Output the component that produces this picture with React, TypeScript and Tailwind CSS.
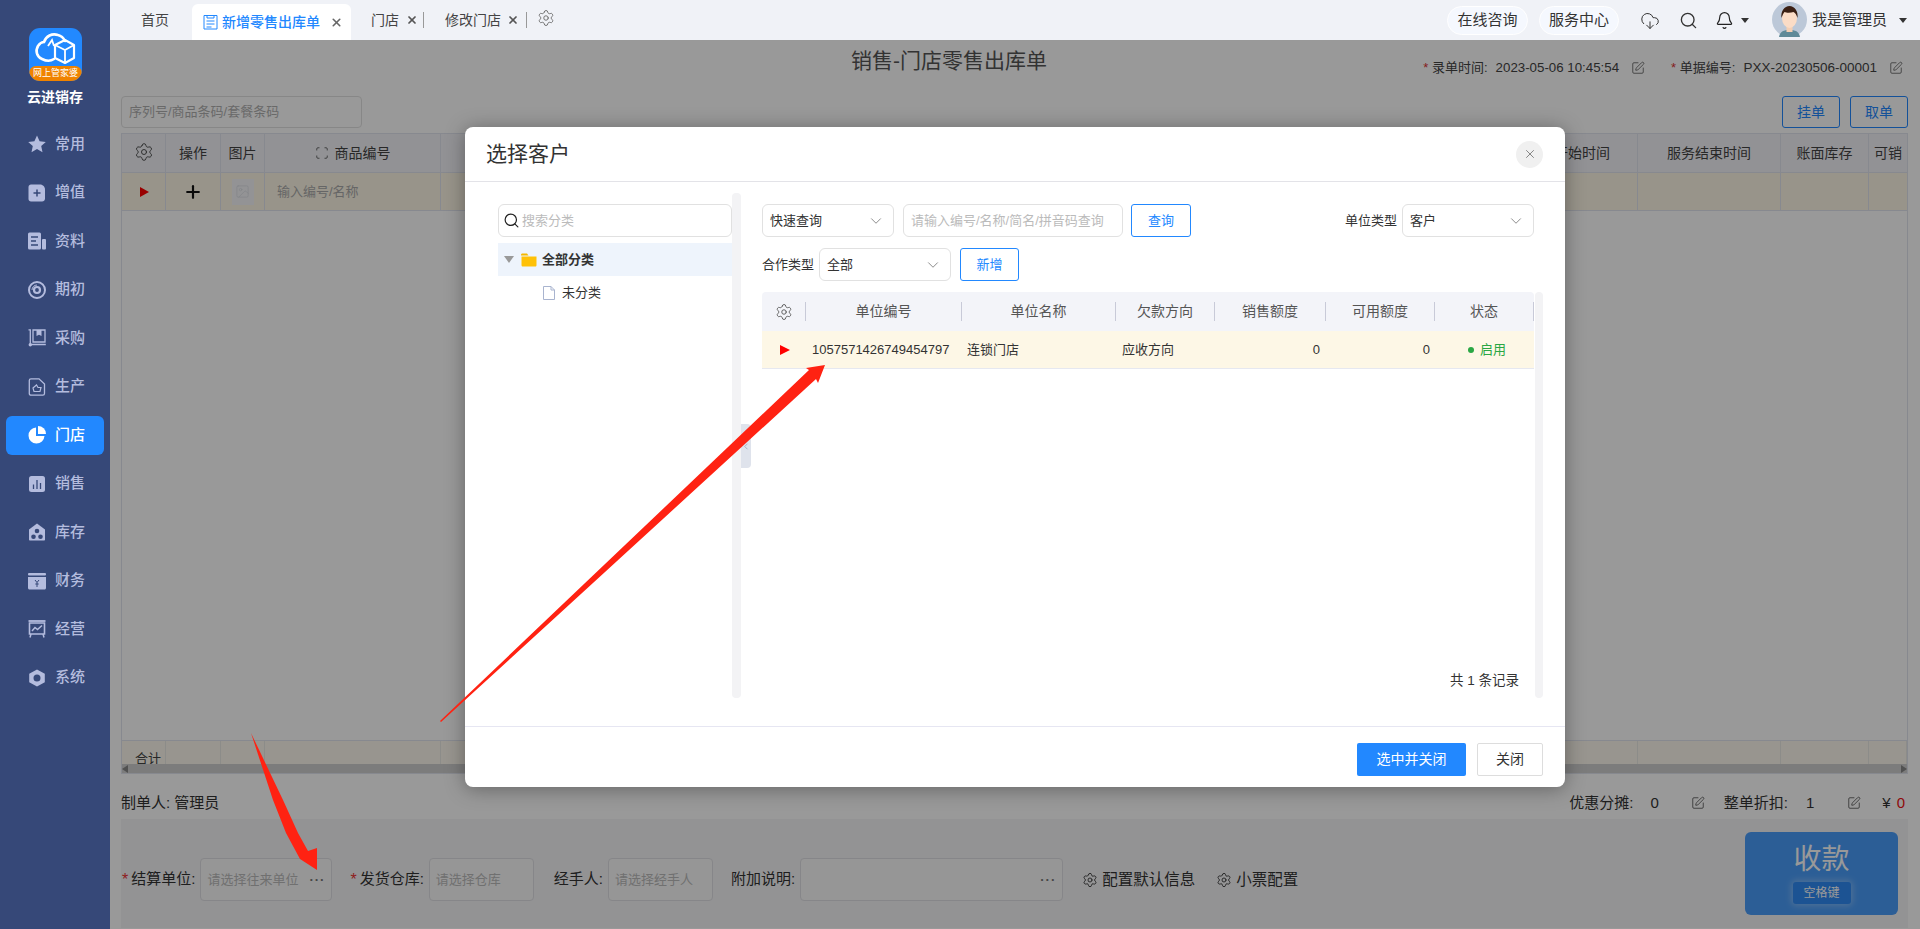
import type React from 'react'
import { Bell, ChevronDown, ChevronLeft, CloudDownload, Image, Plus, Scan, Search, Settings, SquarePen, X } from 'lucide-react'

const ICON = '#b4bcde'
const BG = '#364878'

const menu: { label: string; icon: React.JSX.Element; active?: boolean }[] = [
  { label: '常用', icon: <polygon points="9,0.5 11.6,6.2 17.8,6.9 13.2,11.1 14.5,17.3 9,14.1 3.5,17.3 4.8,11.1 0.2,6.9 6.4,6.2" fill={ICON} /> },
  {
    label: '增值',
    icon: (
      <>
        <path d="M3 0.5h9c3 0 5 2.5 5 5v9c0 1.700-1.300 3-3 3H3c-1.400 0-2.500-1.100-2.500-2.500V3C.5 1.600 1.600.5 3 .5z" fill={ICON} />
        <path d="M9 5.500v7M5.500 9h7" stroke={BG} strokeWidth="1.500" />
      </>
    ),
  },
  {
    label: '资料',
    icon: (
      <>
        <rect x="0" y="0.500" width="13" height="17" rx="1.500" fill={ICON} />
        <rect x="14" y="7" width="4" height="10.500" rx="1" fill={ICON} />
        <path d="M3 5h7M3 9h5M3 13h7" stroke={BG} strokeWidth="1.500" />
      </>
    ),
  },
  {
    label: '期初',
    icon: (
      <>
        <circle cx="9" cy="9" r="8" fill="none" stroke={ICON} strokeWidth="2" />
        <circle cx="9" cy="9" r="3" fill="none" stroke={ICON} strokeWidth="2.200" />
        <path d="M4 9a5 5 0 0 1 5-5" fill="none" stroke={ICON} strokeWidth="1" />
      </>
    ),
  },
  {
    label: '采购',
    icon: (
      <>
        <path d="M.5 .8h1.800v14.200M2.300 15.500h15.500" fill="none" stroke={ICON} strokeWidth="1.300" />
        <path d="M5 1h12v12H5z" fill="none" stroke={ICON} strokeWidth="1.300" />
        <path d="M8.500 1h5v6l-2.500-1.300L8.500 7z" fill={ICON} />
        <circle cx="2.300" cy="15.700" r="1.700" fill={ICON} />
      </>
    ),
  },
  {
    label: '生产',
    icon: (
      <>
        <path d="M3 .8h8l5.500 5.200v9.500c0 1-.8 1.700-1.700 1.700H3c-1 0-1.700-.7-1.700-1.700V2.500C1.300 1.500 2 .8 3 .8z" fill="none" stroke={ICON} strokeWidth="1.300" />
        <path d="M5 10l3.500-3 1.500 2.500h3l-1 4H6z" fill="none" stroke={ICON} strokeWidth="1.200" />
      </>
    ),
  },
  {
    label: '门店',
    active: true,
    icon: (
      <>
        <path d="M8 1.500a8 8 0 1 0 8.500 8.500H8z" fill="#fff" />
        <path d="M10 0a8 8 0 0 1 8 8h-8z" fill="#fff" />
      </>
    ),
  },
  {
    label: '销售',
    icon: (
      <>
        <rect x="1" y="1" width="16" height="16" rx="2.500" fill={ICON} />
        <path d="M5.500 9.500V14M9 5v9M12.500 8v6" stroke={BG} strokeWidth="1.300" />
      </>
    ),
  },
  {
    label: '库存',
    icon: (
      <>
        <path d="M9 .5l8 6v10c0 .7-.5 1-1 1H2c-.5 0-1-.3-1-1v-10z" fill={ICON} />
        <circle cx="9" cy="8" r="2.300" fill={BG} />
        <circle cx="5.500" cy="13.800" r="2.300" fill={BG} />
        <circle cx="12.500" cy="13.800" r="2.300" fill={BG} />
      </>
    ),
  },
  {
    label: '财务',
    icon: (
      <>
        <rect x="0" y="1" width="18" height="2.500" rx="1" fill={ICON} />
        <path d="M0 5h18v11c0 .8-.7 1.500-1.500 1.500h-15C.7 17.500 0 16.800 0 16z" fill={ICON} />
        <path d="M7 8l2 2.500L11 8M9 10.500V15M7.300 12h3.400" fill="none" stroke={BG} strokeWidth="1" />
      </>
    ),
  },
  {
    label: '经营',
    icon: (
      <>
        <path d="M.5 1h17" stroke={ICON} strokeWidth="1.800" />
        <path d="M1.500 3h15v11h-15z" fill="none" stroke={ICON} strokeWidth="1.600" />
        <path d="M4 11l3-3.500 2.500 2L14 5.500M3 14l-1 3.500M15 14l1 3.500" fill="none" stroke={ICON} strokeWidth="1.500" />
      </>
    ),
  },
  {
    label: '系统',
    icon: (
      <path
        fillRule="evenodd"
        d="M9 .5l7.800 4.300v8.400L9 17.500l-7.800-4.300V4.800zM9 5.500a3.500 3.500 0 1 0 0 7 3.500 3.500 0 0 0 0-7z"
        fill={ICON}
      />
    ),
  },
]

function Sidebar(): React.JSX.Element {
  return (
    <aside className="flex w-[110px] shrink-0 flex-col bg-[#364878] pt-[28px]">
      <div className="relative mx-auto ml-[29px] flex h-[53px] w-[53px] flex-col overflow-hidden rounded-[11px] bg-[#2289ff]">
        <svg viewBox="0 0 53 40" className="h-[40px] w-[53px]" fill="none" stroke="#fff" strokeWidth="2.600">
          <path d="M25 31c-3 2-8 2-12 0-5-2-7-8-4-13 2-3 4-4 6-4 2-6 8-9 14-7 4 1 6 4 7 6" strokeLinecap="round" />
          <path d="M26 17l10-5 9 5v13l-9 5-10-5z" strokeWidth="2.200" strokeLinejoin="round" />
          <path d="M26 17l10 5 9-5M36 22v12M19 18l4-6 2 6" strokeWidth="1.800" />
        </svg>
        <div className="absolute inset-x-0 bottom-0 flex h-[15px] items-center justify-center rounded-t-[7px] bg-[#f08300] text-[9px] leading-none whitespace-nowrap text-white">
          网上管家婆
        </div>
      </div>
      <div className="mt-[6px] h-[20px] text-center text-[14px] leading-[20px] font-bold text-white">云进销存</div>
      <nav className="mt-[17.5px] flex flex-col">
        {menu.map((m) => (
          <div
            key={m.label}
            className={`mx-[6px] mb-[9.5px] flex h-[39px] items-center gap-[9px] rounded-[6px] pl-[22px] text-[15px] font-medium ${
              m.active ? 'bg-[#2288ff] text-white' : 'text-[#b4bcde]'
            }`}
          >
            <svg viewBox="0 0 18 18" className="h-[18px] w-[18px]">
              {m.icon}
            </svg>
            <span>{m.label}</span>
          </div>
        ))}
      </nav>
    </aside>
  )
}

function Avatar(): React.JSX.Element {
  return (
    <svg viewBox="0 0 35 35" className="h-[35px] w-[35px]">
      <circle cx="17.500" cy="17.500" r="17.500" fill="#bcc8d8" />
      <path d="M7 35c1-6 5-7 10.500-7s9.500 1 10.500 7z" fill="#5f8a98" />
      <rect x="14.500" y="22" width="6" height="8" fill="#f4cfb4" />
      <ellipse cx="17.500" cy="16" rx="7.500" ry="10" fill="#fbdcc6" />
      <path d="M9.500 16c-1-7 3-12 8-12s9 5 8 12c-1-3-2-5-4-6-3 1-7 1-9 0-1 1-2 3-3 6z" fill="#3b2014" />
    </svg>
  )
}

function TopBar(): React.JSX.Element {
  return (
    <header className="flex h-10 shrink-0 items-end bg-[#f0f2f7] pr-[13px] text-[14px] text-[#444]">
      <span className="mb-[10px] ml-[31px] leading-5">首页</span>
      <div className="ml-[23px] flex h-9 w-[159px] items-center rounded-t-[6px] bg-white pl-[11px] font-medium text-[#2288ff]">
        <svg viewBox="0 0 15 16" className="mr-[4px] h-[16px] w-[15px]" fill="none" stroke="#2288ff" strokeWidth="1">
          <path d="M1 1.500h13v13.500H1zM4 1.500v2.500h7V1.500M3.500 7h8M3.500 10h8M3.500 13h5" />
        </svg>
        <span>新增零售出库单</span>
        <X size={13} strokeWidth={3} className="ml-[10px] text-[#666]" />
      </div>
      <span className="mb-[10px] ml-[20px] leading-5">门店</span>
      <X size={12} strokeWidth={3.500} className="mb-[14px] ml-[7px] text-[#555]" />
      <i className="mb-[12px] ml-[5px] h-4 w-px bg-[#999]" />
      <span className="mb-[10px] ml-[21px] leading-5">修改门店</span>
      <X size={12} strokeWidth={3.500} className="mb-[14px] ml-[6px] text-[#555]" />
      <i className="mb-[12px] ml-[7px] h-4 w-px bg-[#999]" />
      <Settings size={18} strokeWidth={1.200} className="mb-[13px] ml-[10px] text-[#666]" />
      <div className="mb-[5px] ml-auto flex h-[29px] w-[81px] items-center justify-center rounded-full border border-white bg-[#f5f8fe] text-[15px] text-[#333]">
        在线咨询
      </div>
      <div className="mb-[5px] ml-[11px] flex h-[29px] w-[80px] items-center justify-center rounded-full border border-white bg-[#f5f8fe] text-[15px] text-[#333]">
        服务中心
      </div>
      <CloudDownload size={20} strokeWidth={1.200} className="mb-[9px] ml-[21px] text-[#333]" />
      <Search size={19} strokeWidth={1.700} className="mb-[10px] ml-[19px] text-[#333]" />
      <Bell size={19} strokeWidth={1.500} className="mb-[10px] ml-[17px] text-[#222]" />
      <i className="mb-[17px] ml-[7px] h-0 w-0 border-x-[4px] border-t-[5px] border-x-transparent border-t-[#333]" />
      <div className="mb-[3px] ml-[23px]">
        <Avatar />
      </div>
      <span className="mb-[10px] ml-[5px] text-[15px] leading-5 text-[#333]">我是管理员</span>
      <i className="mb-[17px] ml-[12px] h-0 w-0 border-x-[4px] border-t-[5px] border-x-transparent border-t-[#333]" />
    </header>
  )
}

const cols = ['w-[44px]', 'w-[55px]', 'w-[44px]', 'w-[176px]', 'flex-1', 'w-[139px]', 'w-[143px]', 'w-[88px]', 'w-[38px]']

function BillTable(): React.JSX.Element {
  const head = ['', '操作', '图片', '商品编号', '', '服务开始时间', '服务结束时间', '账面库存', '可销']
  return (
    <div className="mt-[5px] flex h-[641px] flex-col border border-[#e2e4ee]">
      <div className="flex h-[39px] shrink-0 border-b border-[#e2e4ee] bg-[#f3f4f9] text-[14px] text-[#444]">
        {head.map((h, i) => (
          <div key={i} className={`${cols[i]} flex items-center justify-center overflow-hidden border-r border-[#e2e4ee] whitespace-nowrap last:border-r-0`}>
            {i === 0 && <Settings size={20} strokeWidth={1.100} className="mb-[2px]" />}
            {i === 3 && <Scan size={14} strokeWidth={1.300} className="mr-[6px]" />}
            {h}
          </div>
        ))}
      </div>
      <div className="flex h-[38px] shrink-0 border-b border-[#e2e4ee] bg-[#fdf7e6] text-[13px]">
        {cols.map((c, i) => (
          <div key={i} className={`${c} flex items-center overflow-hidden border-r border-[#e2e4ee] last:border-r-0`}>
            {i === 0 && <i className="ml-[18px] h-0 w-0 border-y-[5px] border-l-[9px] border-y-transparent border-l-[#f00]" />}
            {i === 1 && <Plus size={20} strokeWidth={2.600} className="mx-auto text-[#111]" />}
            {i === 2 && (
              <div className="mx-auto flex h-[26px] w-[22px] items-center justify-center bg-[#f5f6f9]">
                <Image size={15} strokeWidth={1} className="text-[#d5d8df]" />
              </div>
            )}
            {i === 3 && <span className="pl-[12px] text-[#aaa]">输入编号/名称</span>}
          </div>
        ))}
      </div>
      <div className="flex-1" />
      <div className="relative flex h-[33px] shrink-0 border-t border-[#e2e4ee] bg-[#fdf9ee] text-[13px] text-[#444]">
        {cols.map((c, i) => (
          <div key={i} className={`${c} border-r border-[#eae9e4] pt-[8px] pl-[13px] whitespace-nowrap last:border-r-0`}>
            {i === 0 ? '合计' : ''}
          </div>
        ))}
        <div className="absolute inset-x-0 bottom-0 flex h-[9px] items-center justify-between bg-[#cfcfcf]">
          <i className="h-0 w-0 border-y-[4px] border-r-[6px] border-y-transparent border-r-[#888]" />
          <i className="h-0 w-0 border-y-[4px] border-l-[6px] border-y-transparent border-l-[#888]" />
        </div>
      </div>
    </div>
  )
}

function Field({ label, required, width, placeholder, dots, gap }: { label: string; required?: boolean; width: string; placeholder?: string; dots?: boolean; gap: string }): React.JSX.Element {
  return (
    <div className={`flex items-center ${gap}`}>
      {required && <span className="mr-[3px] text-[#e33]">*</span>}
      <span className="mr-[5px] text-[15px] whitespace-nowrap text-[#333]">{label}:</span>
      <div className={`${width} flex h-[43px] items-center justify-between rounded-[4px] border border-[#e0e0e4] bg-[#fafafa] pr-[6px] pl-[6px] text-[13px] text-[#bbb]`}>
        <span className="whitespace-nowrap">{placeholder}</span>
        {dots && <span className="text-[13px] font-bold tracking-[1px] text-[#777]">···</span>}
      </div>
    </div>
  )
}

function Bill(): React.JSX.Element {
  return (
    <div className="flex h-full flex-col pr-3 pl-[11px] text-[#333]">
      <div className="flex h-14 shrink-0 items-start">
        <h1 className="mt-[6px] ml-[730px] text-[21px] leading-[30px] text-[#555]">销售-门店零售出库单</h1>
        <div className="mt-[19px] ml-auto flex items-center pr-[5px] text-[13px] leading-[18px] text-[#444]">
          <span className="text-[#d33]">*&nbsp;</span>
          <span>录单时间:</span>
          <span className="ml-[8px] text-[13.300px]">2023-05-06 10:45:54</span>
          <SquarePen size={14} strokeWidth={1.200} className="ml-[12px]" />
          <span className="ml-[26px] text-[#d33]">*&nbsp;</span>
          <span>单据编号:</span>
          <span className="ml-[8px] text-[13.500px]">PXX-20230506-00001</span>
          <SquarePen size={14} strokeWidth={1.200} className="ml-[12px]" />
        </div>
      </div>
      <div className="flex h-8 shrink-0 items-stretch justify-between">
        <div className="flex w-[241px] items-center rounded-[4px] border border-[#e2e2e2] pl-[7px] text-[13px] text-[#b0b0b0]">序列号/商品条码/套餐条码</div>
        <div className="flex gap-[10px] text-[14px] text-[#2288ff]">
          <div className="flex w-[58px] items-center justify-center rounded-[3px] border border-[#2288ff]">挂单</div>
          <div className="flex w-[58px] items-center justify-center rounded-[3px] border border-[#2288ff]">取单</div>
        </div>
      </div>
      <BillTable />
      <div className="flex h-[45px] shrink-0 items-center justify-between pt-[13px] text-[15px]">
        <span>制单人: 管理员</span>
        <div className="flex items-center">
          <span>优惠分摊:</span>
          <span className="ml-[17px]">0</span>
          <SquarePen size={14} strokeWidth={1.200} className="ml-[32px]" />
          <span className="ml-[19px]">整单折扣:</span>
          <span className="ml-[18px]">1</span>
          <SquarePen size={14} strokeWidth={1.200} className="ml-[33px]" />
          <span className="ml-[21px]">¥</span>
          <span className="ml-[6px] pr-[3px] text-[#e11]">0</span>
        </div>
      </div>
      <div className="flex h-[109px] shrink-0 items-start bg-[#f5f5f7] pr-[10px]">
        <div className="mt-[39px] flex items-center">
          <Field required label="结算单位" width="w-[132px]" placeholder="请选择往来单位" dots gap="ml-px" />
          <Field required label="发货仓库" width="w-[105px]" placeholder="请选择仓库" gap="ml-[18px]" />
          <Field label="经手人" width="w-[105px]" placeholder="请选择经手人" gap="ml-[20px]" />
          <Field label="附加说明" width="w-[263px]" dots gap="ml-[18px]" />
          <div className="ml-[19px] flex items-center gap-[4px] text-[15.500px]">
            <Settings size={16} strokeWidth={1.300} />
            配置默认信息
          </div>
          <div className="ml-[21px] flex items-center gap-[4px] text-[15.500px]">
            <Settings size={16} strokeWidth={1.300} />
            小票配置
          </div>
        </div>
        <div className="mt-[13px] ml-auto flex h-[83px] w-[153px] flex-col items-center rounded-[6px] bg-[#4a9dfa] pt-[10px] text-white">
          <span className="text-[28px] leading-[36px]">收款</span>
          <span className="mt-[4px] flex h-[22px] w-[58px] items-center justify-center rounded-[3px] bg-[#2f8bf5] text-[12px] shadow-[0_0_6px_2px_rgba(255,255,255,.3)]">空格键</span>
        </div>
      </div>
    </div>
  )
}

function Select({ w, label }: { w: string; label: string }): React.JSX.Element {
  return (
    <div className={`${w} flex h-[33px] items-center justify-between rounded-[6px] border border-[#e1e1e1] pr-[8px] pl-[7px] text-[13px] text-[#333]`}>
      {label}
      <ChevronDown size={18} strokeWidth={1} className="text-[#666]" />
    </div>
  )
}

const customerCols = ['w-[156px]', 'w-[154px]', 'w-[99px]', 'w-[111px]', 'w-[109px]', 'w-[99px]']

function CustomerTable(): React.JSX.Element {
  const head = ['单位编号', '单位名称', '欠款方向', '销售额度', '可用额度', '状态']
  return (
    <div className="mt-[11px]">
      <div className="flex h-[39px] items-center rounded-t-[4px] bg-[#f3f4f9] text-[14px] text-[#555]">
        <div className="flex h-[19px] w-[44px] items-center justify-center border-r border-[#c8cad8] pl-[1px]">
          <Settings size={18} strokeWidth={1.200} />
        </div>
        {head.map((h, i) => (
          <div key={h} className={`${customerCols[i]} h-[19px] border-r border-[#c8cad8] text-center leading-[19px]`}>
            {h}
          </div>
        ))}
      </div>
      <div className="flex h-[38px] items-center border-b border-[#e6e8f0] bg-[#fdf7e6] text-[13px] text-[#333]">
        <div className="w-[44px] pl-[18px]">
          <i className="block h-0 w-0 border-y-[5px] border-l-[10px] border-y-transparent border-l-[#f00]" />
        </div>
        <div className="w-[156px] pl-[6px]">1057571426749454797</div>
        <div className="w-[154px] pl-[5px]">连锁门店</div>
        <div className="w-[99px] pl-[6px]">应收方向</div>
        <div className="w-[111px] pr-[6px] text-right">0</div>
        <div className="w-[109px] pr-[5px] text-right">0</div>
        <div className="flex w-[99px] items-center pl-[33px] text-[#2aa744]">
          <i className="mr-[6px] h-[6px] w-[6px] rounded-full bg-[#2aa744]" />
          启用
        </div>
      </div>
    </div>
  )
}

function CustomerModal(): React.JSX.Element {
  return (
    <div className="flex h-[660px] w-[1100px] flex-col rounded-[8px] bg-white shadow-[0_2px_20px_rgba(0,0,0,.35)]">
      <div className="flex h-[55px] shrink-0 items-center justify-between border-b border-[#e3e3e8] pr-[22px] pl-[21px]">
        <h2 className="text-[21px] text-[#333]">选择客户</h2>
        <div className="flex h-[27px] w-[27px] items-center justify-center rounded-full bg-[#f0f0f0] text-[#777]">
          <X size={14} strokeWidth={1.500} />
        </div>
      </div>
      <div className="flex flex-1 items-start pt-[11px] pl-[33px]">
        <div className="w-[234px] pt-[11px]">
          <div className="flex h-[33px] items-center rounded-[6px] border border-[#e1e1e1] pl-[4px] text-[13px] text-[#bbb]">
            <Search size={17} strokeWidth={1.700} className="mr-[2px] text-[#222]" />
            搜索分类
          </div>
          <div className="mt-[6px] flex h-[33px] items-center bg-[#eef4fc] pl-[6px] text-[13px] font-bold text-[#333]">
            <i className="h-0 w-0 border-x-[5.500px] border-t-[7px] border-x-transparent border-t-[#999]" />
            <svg viewBox="0 0 16 14" className="mr-[5px] ml-[7px] h-[14px] w-[16px]">
              <path d="M0 2c0-1 .5-1.500 1.500-1.500H6L7.500 2.500H0z" fill="#f5b800" />
              <path d="M.5 3.500h15V12c0 1-.5 1.500-1.500 1.500H2c-1 0-1.500-.5-1.500-1.500z" fill="#ffc107" />
            </svg>
            全部分类
          </div>
          <div className="mt-[3px] flex h-[27px] items-center pl-[45px] text-[13px] text-[#333]">
            <svg viewBox="0 0 12 14" className="mr-[7px] h-[14px] w-[12px]" fill="none" stroke="#a9b4cf">
              <path d="M.5.500h7.500l3.500 3.500v9.500H.5zM8 .5v3.500h3.500" />
            </svg>
            未分类
          </div>
        </div>
        <div className="relative h-[505px] w-[9px] rounded-[4px] bg-[#f3f3f5]">
          <div className="absolute top-[231px] left-full flex h-[44px] w-[10px] items-center justify-center rounded-r-[4px] bg-[#dfe3ec] text-[#8892a6]">
            <ChevronLeft size={11} strokeWidth={1.500} />
          </div>
        </div>
        <div className="ml-[21px] flex h-[505px] w-[772px] flex-col pt-[11px] text-[13px]">
          <div className="flex h-[33px] items-center">
            <Select w="w-[132px]" label="快速查询" />
            <div className="ml-[9px] flex h-[33px] w-[220px] items-center rounded-[6px] border border-[#e1e1e1] pl-[7px] text-[#bbb]">请输入编号/名称/简名/拼音码查询</div>
            <div className="ml-[8px] flex h-[33px] w-[60px] items-center justify-center rounded-[3px] border border-[#2288ff] text-[#2288ff]">查询</div>
            <span className="ml-auto mr-[5px] text-[#333]">单位类型</span>
            <Select w="w-[132px]" label="客户" />
          </div>
          <div className="mt-[11px] flex h-[33px] items-center">
            <span className="mr-[5px] text-[#333]">合作类型</span>
            <Select w="w-[132px]" label="全部" />
            <div className="ml-[9px] flex h-[33px] w-[59px] items-center justify-center rounded-[3px] border border-[#2288ff] text-[#2288ff]">新增</div>
          </div>
          <CustomerTable />
          <div className="mt-auto pr-[15px] pb-[7px] text-right text-[13.500px] text-[#333]">共 1 条记录</div>
        </div>
        <div className="mt-[99px] ml-px h-[406px] w-[8px] rounded-[4px] bg-[#f3f3f5]" />
      </div>
      <div className="flex h-[61px] shrink-0 items-start justify-end gap-[11px] border-t border-[#e6e6f2] pt-[16px] pr-[22px] text-[14px]">
        <div className="flex h-[33px] w-[109px] items-center justify-center rounded-[2px] bg-[#2288ff] text-white">选中并关闭</div>
        <div className="flex h-[33px] w-[66px] items-center justify-center rounded-[2px] border border-[#ddd] text-[#333]">关闭</div>
      </div>
    </div>
  )
}

export default function App(): React.JSX.Element {
  return (
    <div className="relative flex h-[929px] w-[1920px] overflow-hidden bg-white font-['Liberation_Sans','Noto_Sans_CJK_SC',sans-serif]">
      <Sidebar />
      <div className="flex min-w-0 flex-1 flex-col">
        <TopBar />
        <main className="relative flex-1">
          <Bill />
          <div className="absolute inset-0 flex items-start justify-center bg-black/40 pt-[87px]">
            <CustomerModal />
          </div>
        </main>
      </div>
      {/* red arrows drawn on top of the screenshot */}
      <svg viewBox="0 0 1920 929" className="pointer-events-none absolute inset-0 h-[929px] w-[1920px]">
        <polygon points="440,721 809,370 806,368 825,365 818,383 816,379 441,722" fill="#ff2212" />
        <polygon points="251,733 283,800 298,833 308,851 317,848 317,870 300,859 286,833 273,800" fill="#ff2212" />
      </svg>
    </div>
  )
}
